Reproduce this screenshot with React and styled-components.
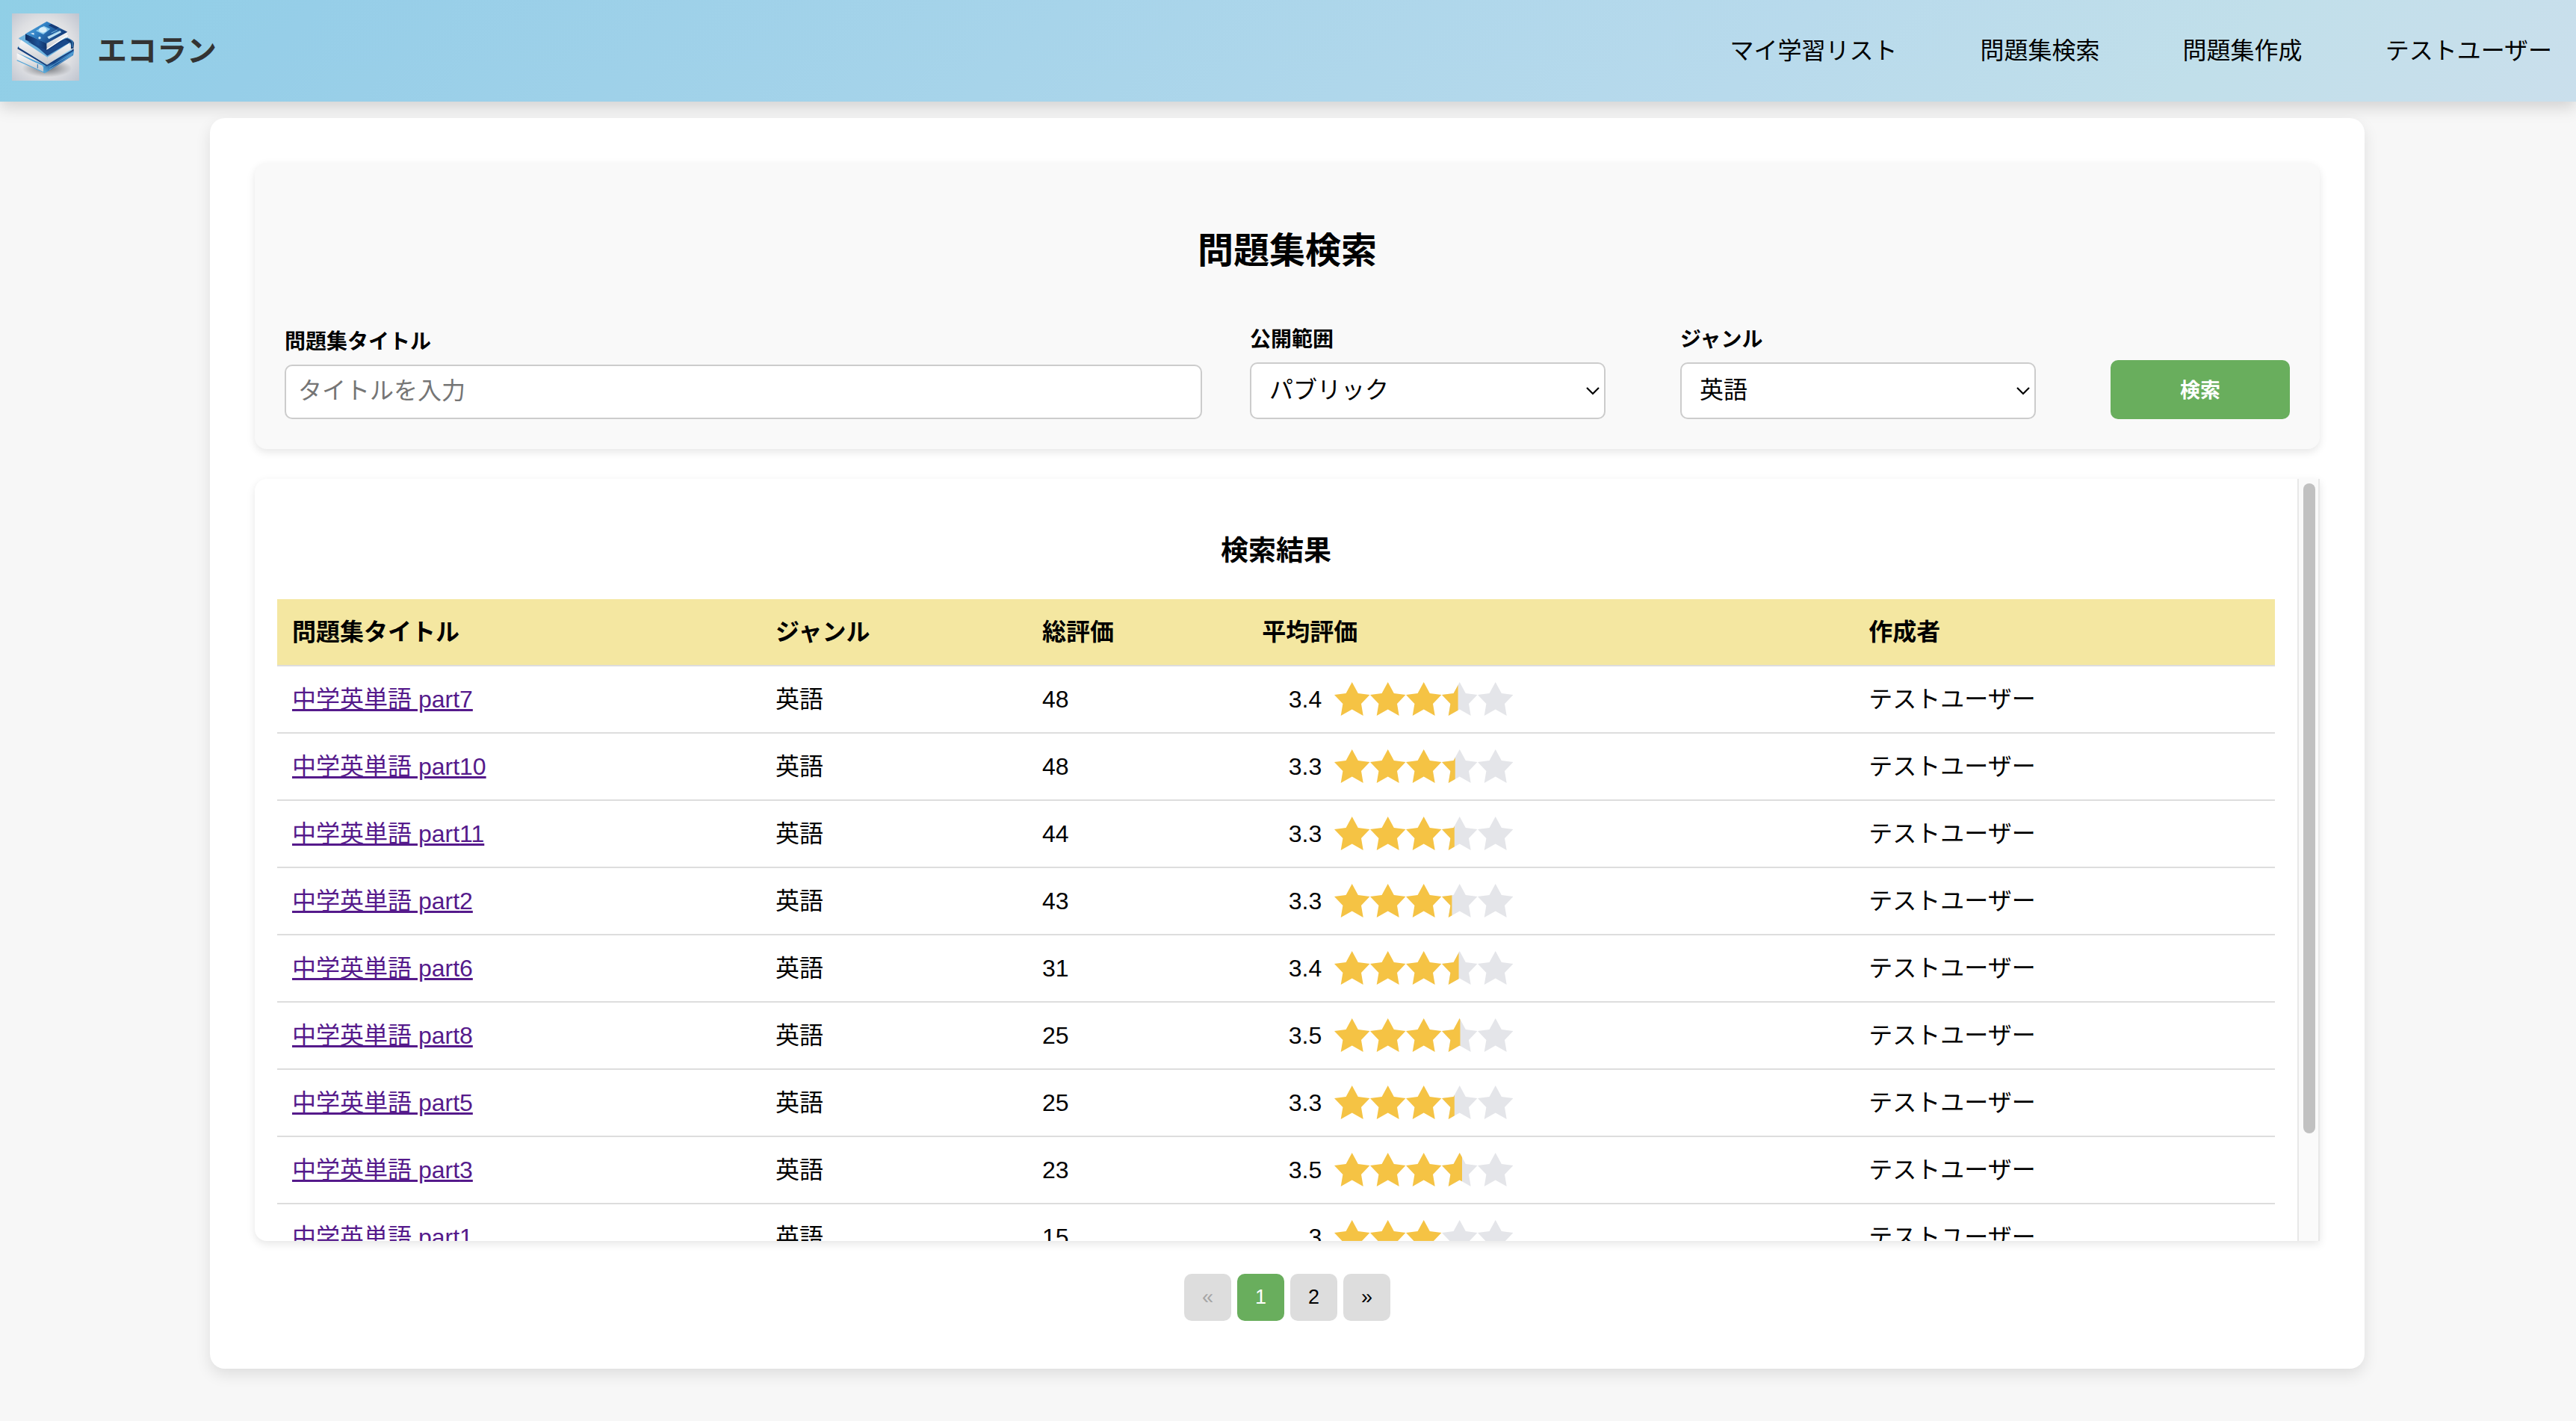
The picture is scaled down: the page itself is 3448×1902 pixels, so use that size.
import React from "react";
import styled, { createGlobalStyle } from "styled-components";

const green = "#69ae5d";
const font = '"Liberation Sans", Arial, "Noto Sans CJK JP", sans-serif';

const GlobalStyle = createGlobalStyle`
  *, *::before, *::after { box-sizing: border-box; }
  html, body { margin: 0; }
  body {
    background: #f7f7f7;
    color: #000;
    font-family: ${font};
    font-size: 32px;
    line-height: 48px;
  }
  button, input, select { font-family: inherit; }
`;

const Header = styled.header`
  display: flex;
  align-items: center;
  justify-content: space-between;
  min-height: 136px;
  padding: 0 32px 0 16px;
  background: linear-gradient(135deg, #90cfe6, #96cee8 12%, #b8daec 68%, #c1dfea 85%, #cadfec);
  box-shadow: 0 8px 20px rgba(0, 0, 0, 0.15);
`;

const Brand = styled.a`
  display: flex;
  align-items: center;
  gap: 24px;
  color: #333;
  font-size: 40px;
  font-weight: bold;
  text-decoration: none;
`;

const LogoImage = styled.svg`
  display: block;
  width: 90px;
  height: 90px;
  margin-bottom: 10px;
`;

const Nav = styled.nav`
  display: flex;
  gap: 111px;
`;

const NavLink = styled.a`
  color: #000;
  text-decoration: none;
`;

const Card = styled.main`
  margin: 22px 283px 70px 281px;
  padding: 60px 60px 64px;
  border-radius: 20px;
  background: #fff;
  box-shadow: 0 8px 20px rgba(0, 0, 0, 0.1);
`;

const SearchPanel = styled.section`
  padding: 82px 40px 40px;
  border-radius: 16px;
  background: #f9f9f9;
  box-shadow: 0 4px 12px rgba(0, 0, 0, 0.1);
`;

const PageTitle = styled.h1`
  margin: 0 0 63px;
  font-size: 48px;
  line-height: 72px;
  text-align: center;
`;

const SearchForm = styled.form`
  display: flex;
  align-items: flex-end;
  gap: 100px;
`;

const FieldRow = styled.div`
  display: flex;
  flex: 1;
  align-items: flex-end;
  gap: 64px;
`;

const Field = styled.div`
  display: flex;
  flex-direction: column;
  gap: 10px;
  ${({ $grow }) => ($grow ? "flex: 1;" : "width: 476px;")}
`;

const Label = styled.label`
  font-size: 28px;
  font-weight: bold;
  line-height: 40px;
`;

const TextInput = styled.input`
  width: 100%;
  height: 73px;
  padding: 0 16px 2px;
  border: 2px solid #ccc;
  border-radius: 10px;
  background: #fff;
  font-size: 32px;
  &::placeholder { color: #757575; opacity: 1; }
`;

const SelectWrap = styled.div`
  position: relative;
`;

const Select = styled.select`
  display: block;
  width: 100%;
  height: 76px;
  padding: 0 48px 2px 24px;
  border: 2px solid #ccc;
  border-radius: 10px;
  background: #fff;
  color: #000;
  font-size: 32px;
  appearance: none;
`;

const Chevron = styled.svg`
  position: absolute;
  top: 31px;
  right: 7px;
  width: 20px;
  height: 14px;
  pointer-events: none;
`;

const SearchButton = styled.button`
  width: 240px;
  height: 79px;
  padding: 0 0 2px;
  border: 0;
  border-radius: 10px;
  background: ${green};
  color: #fff;
  font-size: 27px;
  font-weight: bold;
`;

const ResultsPanel = styled.section`
  display: flex;
  height: 1020px;
  margin-top: 40px;
  border-radius: 16px 0 0 16px;
  background: #fff;
  box-shadow: 0 4px 12px rgba(0, 0, 0, 0.1);
`;

const ResultsScroll = styled.div`
  flex: 1;
  padding: 69px 30px 40px;
  overflow-y: auto;
  scrollbar-width: none;
  border-radius: 16px 0 0 16px;
`;

const ScrollTrack = styled.div`
  width: 30px;
  padding: 6px 4px 6px 6px;
  border: solid #e8e8e8;
  border-width: 0 2px;
  background: #fafafa;
`;

const ScrollThumb = styled.div`
  width: 16px;
  height: 86.3%;
  border-radius: 8px;
  background: #c1c1c1;
`;

const ResultsTitle = styled.h2`
  margin: 0 0 36px;
  font-size: 37px;
  line-height: 56px;
  text-align: center;
`;

const Table = styled.table`
  width: 100%;
  border-spacing: 0;
  table-layout: fixed;
  text-align: left;
`;

const Col = styled.col`
  width: ${({ $width }) => $width};
`;

const HeadCell = styled.th`
  padding: 20px;
  border-bottom: 2px solid #ddd;
  background: #f4e7a1;
`;

const Cell = styled.td`
  padding: 20px;
  border-bottom: 2px solid #ddd;
`;

const SetLink = styled.a`
  color: #551a8b;
  text-decoration: underline;
`;

const Rating = styled.div`
  display: flex;
  align-items: center;
  gap: 17px;
  height: 48px;
`;

const Score = styled.span`
  width: 80px;
  text-align: right;
`;

const StarRow = styled.svg`
  display: block;
  width: 240px;
  height: 46px;
`;

const Pagination = styled.nav`
  display: flex;
  justify-content: center;
  gap: 8px;
  margin-top: 44px;
`;

const PageButton = styled.button`
  width: 63px;
  height: 63px;
  padding: 0;
  border: 0;
  border-radius: 10px;
  background: ${({ $active }) => ($active ? green : "#ddd")};
  color: ${({ $active }) => ($active ? "#fff" : "#000")};
  font-size: 27px;
  &:disabled { color: #a5a5a5; }
`;

const STAR = "23.7,0 31.8,15 47.4,17 36,29 38.7,45 23.7,36.5 8.7,45 11.4,29 0,17 15.6,15";

function Stars({ value }) {
  return (
    <StarRow viewBox="0 0 240 46" role="img" aria-label={`5点中${value}点`}>
      {[0, 1, 2, 3, 4].map((i) => {
        const part = Math.max(0, Math.min(1, value - i));
        const id = `star-${String(value).replace(".", "-")}-${i}`;
        return (
          <g key={i} transform={`translate(${i * 48} 0)`}>
            <clipPath id={id}>
              <rect width={part * 48} height="46" />
            </clipPath>
            <polygon points={STAR} fill={part === 1 ? "#f5c344" : "#e4e5e9"} />
            {part > 0 && part < 1 && (
              <polygon points={STAR} fill="#f5c344" clipPath={`url(#${id})`} />
            )}
          </g>
        );
      })}
    </StarRow>
  );
}

function Logo() {
  return (
    <LogoImage viewBox="0 0 270 270" aria-hidden="true">
      <defs>
        <radialGradient id="logo-bg" cx=".48" cy=".5" r=".72">
          <stop offset="0" stopColor="#f6f6f6" />
          <stop offset=".6" stopColor="#dedfe2" />
          <stop offset="1" stopColor="#bfc4cf" />
        </radialGradient>
        <linearGradient id="logo-cover" x1="0" y1="0" x2="1" y2=".5">
          <stop offset="0" stopColor="#5fb0e2" />
          <stop offset=".45" stopColor="#2f7fc3" />
          <stop offset="1" stopColor="#123a78" />
        </linearGradient>
        <linearGradient id="logo-spine" x1="0" y1="0" x2="1" y2="0">
          <stop offset="0" stopColor="#0f2d62" />
          <stop offset=".6" stopColor="#1d5497" />
          <stop offset="1" stopColor="#10336b" />
        </linearGradient>
        <linearGradient id="logo-pages" x1="0" y1="0" x2="0" y2="1">
          <stop offset="0" stopColor="#f8f8f8" />
          <stop offset="1" stopColor="#c6c8cc" />
        </linearGradient>
        <linearGradient id="logo-base" x1="0" y1="1" x2="1" y2="0">
          <stop offset="0" stopColor="#63b5e0" />
          <stop offset=".4" stopColor="#14488c" />
          <stop offset="1" stopColor="#4a9bd6" />
        </linearGradient>
        <radialGradient id="logo-shadow">
          <stop offset="0" stopColor="#6e7177" />
          <stop offset="1" stopColor="#6e7177" stopOpacity="0" />
        </radialGradient>
      </defs>
      <rect width="270" height="270" fill="url(#logo-bg)" />
      <ellipse cx="140" cy="220" rx="100" ry="36" fill="url(#logo-shadow)" />
      <path d="M20 160 L126 206 L126 238 L20 188 Z" fill="url(#logo-pages)" />
      <path d="M22 158 L126 204 L148 212 L132 240 L20 190 L20 186 L126 234 L126 216 Z" fill="#4ea3d8" />
      <path d="M24 166 L124 210 L124 230 L24 184 Z" fill="url(#logo-pages)" />
      <path d="M103 204 V220" stroke="#2475b8" strokeWidth="3" />
      <path d="M130 212 L247 148 L249 152 L246 168 L134 239 L126 232 Z" fill="url(#logo-base)" />
      <path d="M150 216 L244 160 M150 226 L240 168" stroke="#7cc4ea" strokeWidth="2" />
      <path d="M25 132 L139 204 L248 142 L248 150 L140 212 L22 142 Z" fill="#173f7d" />
      <path d="M25 132 L139 203 L240 146" fill="none" stroke="#8bcbed" strokeWidth="4" />
      <path d="M26 100 L60 80 L222 98 L248 116 L142 186 Z" fill="#6fb4df" />
      <path d="M62 112 L142 160 L232 118 L218 100 L140 132 Z" fill="#153f7c" />
      <path d="M36 106 L142 176 L142 206 L28 137 Z" fill="url(#logo-pages)" />
      <path d="M142 176 L232 118 L234 144 L142 206 Z" fill="url(#logo-pages)" />
      <path d="M222 98 Q250 108 249 120 L247 140 L237 142 V120 L214 106 Z" fill="#123970" />
      <path d="M222 98 Q246 108 243 120 L242 136" fill="none" stroke="#4b9bd5" strokeWidth="3" />
      <path d="M78 114 L140 150 L214 104 L232 116 L142 170 Z" fill="#1b4a8b" />
      <path d="M139 120 L223 74 L220 92 L139 146 Z" fill="url(#logo-pages)" />
      <path d="M139 144 L224 88" stroke="#fff" strokeWidth="4" />
      <path d="M54 82 L139 119 L139 145 L54 106 Z" fill="url(#logo-spine)" />
      <path d="M140 32 L223 74 L139 120 L54 82 Z" fill="url(#logo-cover)" />
      <path d="M158 42 L188 56 L178 64 L146 48 Z" fill="#153b78" />
      <path d="M128 50 L154 62 L126 84 L96 70 Z" fill="#8dcbed" />
      <ellipse cx="124" cy="66" rx="16" ry="11" fill="#d8effa" />
      <path d="M142 94 L194 69 L198 76 L148 103 Z" fill="#b9e0f3" />
      <path d="M158 78 L182 67 M166 82 L190 71" stroke="#75b9e3" strokeWidth="3" />
      <path d="M74 80 L88 78 L89 86 Z" fill="#e7f5fc" />
      <circle cx="111" cy="98" r="5" fill="#cdeaf8" />
    </LogoImage>
  );
}

function SelectField({ id, label, options }) {
  return (
    <Field>
      <Label htmlFor={id}>{label}</Label>
      <SelectWrap>
        <Select id={id} name={id}>
          {options.map((o) => (
            <option key={o}>{o}</option>
          ))}
        </Select>
        <Chevron viewBox="0 0 20 14" aria-hidden="true">
          <path d="M2 3 L10 11 L18 3" fill="none" stroke="#000" strokeWidth="2.2" />
        </Chevron>
      </SelectWrap>
    </Field>
  );
}

const navItems = ["マイ学習リスト", "問題集検索", "問題集作成", "テストユーザー"];

const columns = [
  { label: "問題集タイトル", width: "24.2%" },
  { label: "ジャンル", width: "13.35%" },
  { label: "総評価", width: "11%" },
  { label: "平均評価", width: "30.37%" },
  { label: "作成者", width: "21.08%" },
];

const results = [
  { part: 7, total: 48, score: "3.4", average: 3.45 },
  { part: 10, total: 48, score: "3.3", average: 3.37 },
  { part: 11, total: 44, score: "3.3", average: 3.35 },
  { part: 2, total: 43, score: "3.3", average: 3.28 },
  { part: 6, total: 31, score: "3.4", average: 3.47 },
  { part: 8, total: 25, score: "3.5", average: 3.51 },
  { part: 5, total: 25, score: "3.3", average: 3.35 },
  { part: 3, total: 23, score: "3.5", average: 3.56 },
  { part: 1, total: 15, score: "3", average: 3 },
];

export default function App() {
  return (
    <>
      <GlobalStyle />
      <Header>
        <Brand href="#">
          <Logo />
          エコラン
        </Brand>
        <Nav>
          {navItems.map((item) => (
            <NavLink key={item} href="#">{item}</NavLink>
          ))}
        </Nav>
      </Header>
      <Card>
        <SearchPanel>
          <PageTitle>問題集検索</PageTitle>
          <SearchForm onSubmit={(e) => e.preventDefault()}>
            <FieldRow>
              <Field $grow>
                <Label htmlFor="title">問題集タイトル</Label>
                <TextInput id="title" name="title" type="text" placeholder="タイトルを入力" />
              </Field>
              <SelectField id="scope" label="公開範囲" options={["パブリック"]} />
            </FieldRow>
            <SelectField id="genre" label="ジャンル" options={["英語"]} />
            <SearchButton type="submit">検索</SearchButton>
          </SearchForm>
        </SearchPanel>
        <ResultsPanel>
          <ResultsScroll>
            <ResultsTitle>検索結果</ResultsTitle>
            <Table>
              <colgroup>
                {columns.map((c) => (
                  <Col key={c.label} $width={c.width} />
                ))}
              </colgroup>
              <thead>
                <tr>
                  {columns.map((c) => (
                    <HeadCell key={c.label} scope="col">{c.label}</HeadCell>
                  ))}
                </tr>
              </thead>
              <tbody>
                {results.map((r) => (
                  <tr key={r.part}>
                    <Cell><SetLink href="#">中学英単語 part{r.part}</SetLink></Cell>
                    <Cell>英語</Cell>
                    <Cell>{r.total}</Cell>
                    <Cell>
                      <Rating>
                        <Score>{r.score}</Score>
                        <Stars value={r.average} />
                      </Rating>
                    </Cell>
                    <Cell>テストユーザー</Cell>
                  </tr>
                ))}
              </tbody>
            </Table>
          </ResultsScroll>
          <ScrollTrack aria-hidden="true">
            <ScrollThumb />
          </ScrollTrack>
        </ResultsPanel>
        <Pagination aria-label="ページ">
          <PageButton type="button" disabled>«</PageButton>
          <PageButton type="button" $active aria-current="page">1</PageButton>
          <PageButton type="button">2</PageButton>
          <PageButton type="button">»</PageButton>
        </Pagination>
      </Card>
    </>
  );
}
